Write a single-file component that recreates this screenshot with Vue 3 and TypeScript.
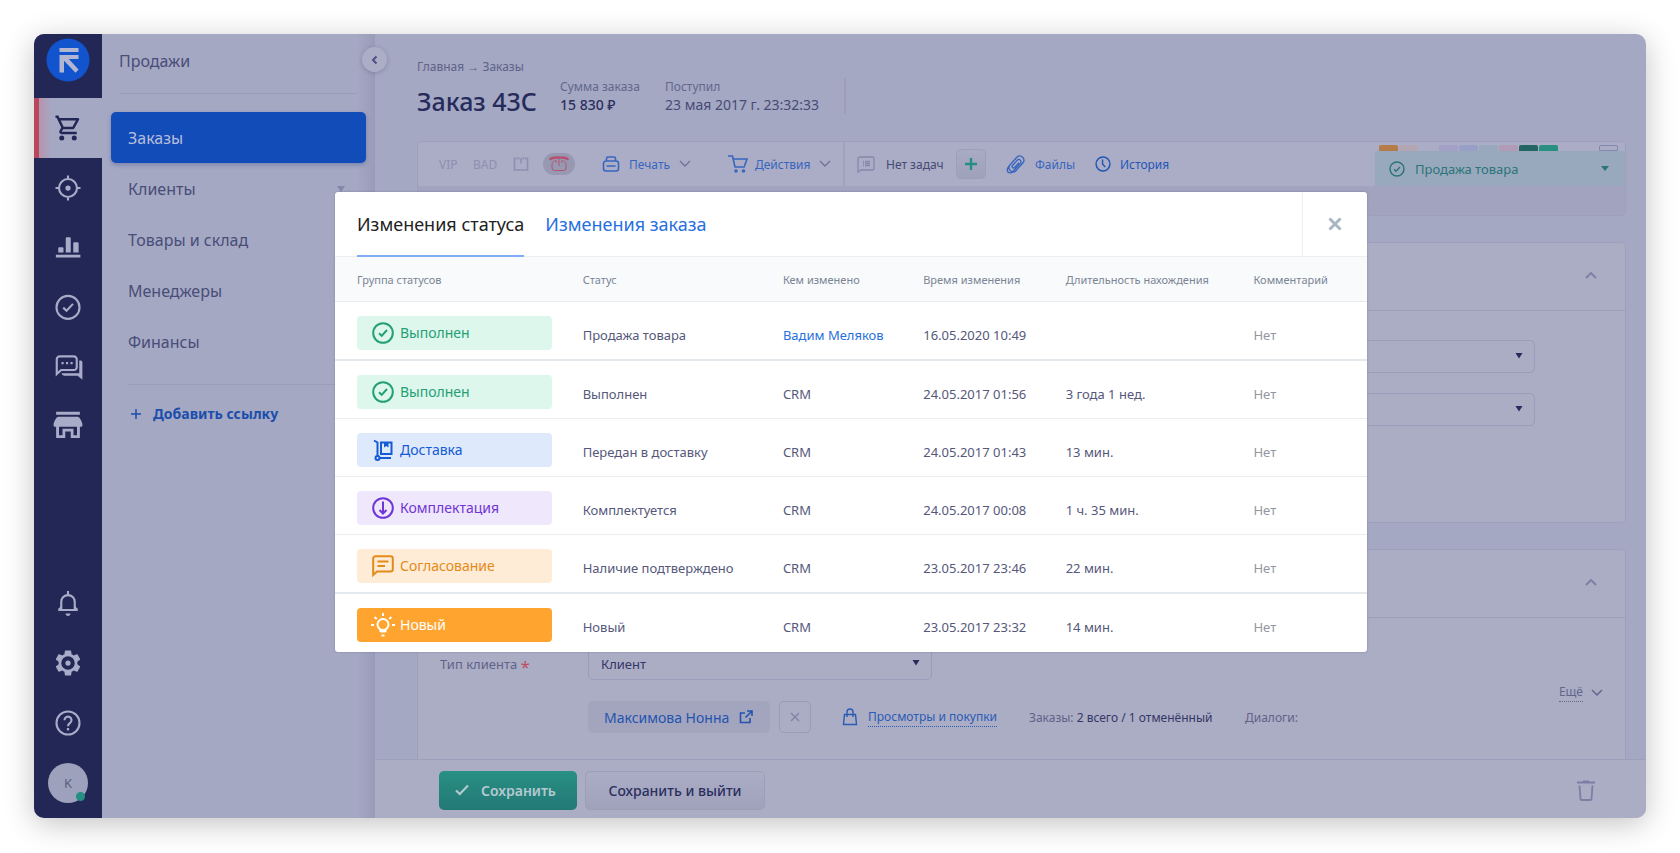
<script setup lang="ts">
import { ref } from 'vue'

interface Shape { d: string; fill?: boolean }
interface RailItem { id: string; label: string; shapes: Shape[] }
interface Change {
  kind: 'done' | 'delivery' | 'assembly' | 'approval' | 'fresh'
  group: string
  status: string
  author: string
  link?: boolean
  time: string
  duration: string
  strong?: boolean
}

const railTop: RailItem[] = [
  { id: 'sales', label: 'Продажи', shapes: [{ fill: true, d: 'M15.55 13c.75 0 1.41-.41 1.75-1.03l3.58-6.49c.37-.66-.11-1.48-.87-1.48H5.21l-.94-2H2v2h1l3.6 7.59-1.35 2.44C4.52 15.37 5.48 17 7 17h12v-2H7l1.1-2h7.45zM6.16 6h12.15l-2.76 5H8.53L6.16 6zM7 18a2 2 0 1 0 0 4 2 2 0 0 0 0-4zm10 0a2 2 0 1 0 0 4 2 2 0 0 0 0-4z' }] },
  { id: 'leads', label: 'Цели', shapes: [{ d: 'M12 4.8a7.2 7.2 0 1 0 0 14.4 7.2 7.2 0 0 0 0-14.4zM12 2v3M12 19v3M2 12h3M19 12h3' }, { fill: true, d: 'M12 9.9a2.1 2.1 0 1 0 0 4.2 2.1 2.1 0 0 0 0-4.2z' }] },
  { id: 'stats', label: 'Аналитика', shapes: [{ fill: true, d: 'M5 11.4h2.6a.8.8 0 0 1 .8.8v3.3H4.2v-3.3a.8.8 0 0 1 .8-.8zM11 3.4h2.4a.8.8 0 0 1 .8.8v11.3h-4V4.2a.8.8 0 0 1 .8-.8zM17 7.4h2.7a.8.8 0 0 1 .8.8v7.3h-4.3V8.2a.8.8 0 0 1 .8-.8zM2.3 17.4h19.6v2.2H2.3z' }] },
  { id: 'tasks', label: 'Задачи', shapes: [{ d: 'M12 2.3a9.2 9.2 0 1 0 0 18.4 9.2 9.2 0 0 0 0-18.4zM8.2 11.7l2.6 2.5 5.2-5.5' }] },
  { id: 'chats', label: 'Чаты', shapes: [{ d: 'M3 16.9V5a2.3 2.3 0 0 1 2.3-2.3h11.4A2.3 2.3 0 0 1 19 5v6.300a2.3 2.3 0 0 1-2.3 2.3H6.5z' }, { fill: true, d: 'M6.8 7.1h1.7v1.8H6.8zM10.4 7.1h1.7v1.8h-1.7zM14 7.1h1.7v1.8H14zM21 6h1.2a1.3 1.3 0 0 1 1.3 1.3v14l-3.800-3.2H9a2.5 2.500 0 0 1-2.200-1.900H21z' }] },
  { id: 'shop', label: 'Магазин', shapes: [{ fill: true, d: 'M2.5-1h19v2.400h-19zM4.300 3h15.400c1.600 0 3.800 4.200 3.800 6v1c0 .6-.4 1-1 1h-1v9h-7.300v-5.200h-4.400V20H2.500v-9h-1c-.6 0-1-.4-1-1V9c0-1.800 2.200-6 3.800-6zM4.800 11v6.700h2.800v-5.200h8.800v5.200h2.800V11z' }] },
]

const railBottom: RailItem[] = [
  { id: 'alerts', label: 'Уведомления', shapes: [{ d: 'M4.2 17.600h15.600M6.600 17.300v-6.200a5.400 5.400 0 0 1 10.800 0v6.200M12 2.300v3' }, { fill: true, d: 'M10 20.300h4c0 1.300-.9 2-2 2s-2-.7-2-2zM4 16.800l2.500-2.500v3zM20 16.800l-2.500-2.500v3z' }] },
  { id: 'settings', label: 'Настройки', shapes: [{ fill: true, d: 'M19.43 12.98c.04-.32.07-.64.07-.98 0-.34-.03-.66-.07-.98l2.11-1.65c.19-.15.24-.42.12-.64l-2-3.46c-.09-.16-.26-.25-.44-.25-.06 0-.12.01-.17.03l-2.49 1c-.52-.4-1.08-.73-1.69-.98l-.38-2.65C14.46 2.18 14.25 2 14 2h-4c-.25 0-.46.18-.49.42l-.38 2.65c-.61.25-1.17.59-1.69.98l-2.49-1c-.06-.02-.12-.03-.18-.03-.17 0-.34.09-.43.25l-2 3.46c-.13.22-.07.49.12.64l2.11 1.65c-.04.32-.07.65-.07.98 0 .33.03.66.07.98l-2.11 1.65c-.19.15-.24.42-.12.64l2 3.46c.09.16.26.25.44.25.06 0 .12-.01.17-.03l2.49-1c.52.4 1.08.73 1.69.98l.38 2.65c.03.24.24.42.49.42h4c.25 0 .46-.18.49-.42l.38-2.65c.61-.25 1.17-.59 1.69-.98l2.49 1c.06.02.12.03.18.03.17 0 .34-.09.43-.25l2-3.46c.12-.22.07-.49-.12-.64zM12 6.600a5.400 5.400 0 1 1 0 10.800 5.400 5.400 0 0 1 0-10.800zM12 9.900a2.100 2.100 0 1 0 0 4.200 2.100 2.100 0 0 0 0-4.200z' }] },
  { id: 'help', label: 'Помощь', shapes: [{ d: 'M12 2.8a9.2 9.2 0 1 0 0 18.4 9.2 9.2 0 0 0 0-18.4zM9.2 9.8a2.8 2.8 0 1 1 4.4 2.2c-1 .8-1.600 1.200-1.600 2.600' }, { fill: true, d: 'M11.1 16h1.800v1.900h-1.800z' }] },
]

const sections = ['Заказы', 'Клиенты', 'Товары и склад', 'Менеджеры', 'Финансы']
const strips = ['orange', 'beige', 'none', 'lilac', 'blue', 'current', 'pink', 'teal', 'green', 'none', 'none', 'empty']
const columns = ['Группа статусов', 'Статус', 'Кем изменено', 'Время изменения', 'Длительность нахождения', 'Комментарий']

const changes: Change[] = [
  { kind: 'done', group: 'Выполнен', status: 'Продажа товара', author: 'Вадим Меляков', link: true, time: '16.05.2020 10:49', duration: '', strong: true },
  { kind: 'done', group: 'Выполнен', status: 'Выполнен', author: 'CRM', time: '24.05.2017 01:56', duration: '3 года 1 нед.' },
  { kind: 'delivery', group: 'Доставка', status: 'Передан в доставку', author: 'CRM', time: '24.05.2017 01:43', duration: '13 мин.' },
  { kind: 'assembly', group: 'Комплектация', status: 'Комплектуется', author: 'CRM', time: '24.05.2017 00:08', duration: '1 ч. 35 мин.' },
  { kind: 'approval', group: 'Согласование', status: 'Наличие подтверждено', author: 'CRM', time: '23.05.2017 23:46', duration: '22 мин.', strong: true },
  { kind: 'fresh', group: 'Новый', status: 'Новый', author: 'CRM', time: '23.05.2017 23:32', duration: '14 мин.' },
]

const clientType = ref('Клиент')
</script>

<template>
  <div class="stage">
    <div class="app">
      <nav class="rail" aria-label="Модули">
        <a class="logo" href="#" aria-label="Главная">
          <svg viewBox="0 0 44 44" width="44" height="44">
            <circle cx="22" cy="22" r="21.5" fill="#1254cd" />
            <path fill="#b3b6d0" d="M13.5 10h19v4h-19zM13.5 17h19v4H22.8l9.7 10.5-3 3.200L18 22.800V34.500h-4.500z" />
          </svg>
        </a>
        <a v-for="(item, i) in railTop" :key="item.id" href="#" class="rail-item" :class="{ active: i === 0 }" :aria-label="item.label">
          <svg viewBox="0 0 24 24" width="30" height="30">
            <path v-for="(s, k) in item.shapes" :key="k" :d="s.d" :class="s.fill ? 'solid' : 'line'" />
          </svg>
        </a>
        <div class="spring"></div>
        <a v-for="item in railBottom" :key="item.id" href="#" class="rail-item" :aria-label="item.label">
          <svg viewBox="0 0 24 24" width="30" height="30">
            <path v-for="(s, k) in item.shapes" :key="k" :d="s.d" :class="s.fill ? 'solid' : 'line'" />
          </svg>
        </a>
        <div class="rail-item"><span class="avatar">K<i></i></span></div>
      </nav>

      <aside class="menu">
        <div class="menu-title">Продажи</div>
        <button class="collapse" aria-label="Свернуть">
          <svg viewBox="0 0 10 10" width="10" height="10"><path d="M6.5 1.5 3 5l3.5 3.5" /></svg>
        </button>
        <a v-for="(name, i) in sections" :key="name" href="#" class="section" :class="{ current: i === 0 }">
          <span>{{ name }}</span>
          <svg v-if="i === 1" viewBox="0 0 8 6" width="8" height="6"><path d="M0 0h8L4 6z" /></svg>
        </a>
        <a href="#" class="add-link">
          <svg viewBox="0 0 10 10" width="10" height="10"><path d="M5 0v10M0 5h10" /></svg>
          <span>Добавить ссылку</span>
        </a>
      </aside>

      <main class="main">
        <div class="scroll">
          <div class="crumbs"><a href="#">Главная</a> → <a href="#">Заказы</a></div>
          <header class="head">
            <h1>Заказ 43С</h1>
            <div class="fact sum"><span>Сумма заказа</span><b>15 830 ₽</b></div>
            <div class="fact date"><span>Поступил</span><em>23 мая 2017 г. 23:32:33</em></div>
          </header>

          <section class="toolbar">
            <div class="tools">
              <div class="marks">
                <button class="flag vip">VIP</button>
                <button class="flag bad">BAD</button>
                <button class="flag box" aria-label="Метка">
                  <svg viewBox="0 0 16 16" width="16" height="16"><path d="M4 2.500H1.500v11.500h13V2.500H12M8 2v5.500M5.500 1v2.500M10.500 1v2.500" /></svg>
                </button>
                <button class="flag phone" aria-label="Не звонить">
                  <svg viewBox="0 0 20 16" width="20" height="16"><path d="M5.500 4.500C3.800 5.500 3 7 3 9v3a2.500 2.500 0 0 0 2.500 2.500h9A2.500 2.500 0 0 0 17 12V9c0-2-.8-3.500-2.500-4.500M10 3v7M7 4v3M13 4v3" /><path class="handset" d="M1 4c.5-1.500 1.500-2 4-2.200 3-.3 7-.3 10 0 2.500.2 3.500.7 4 2.200" /></svg>
                </button>
                <button class="tool print">
                  <svg viewBox="0 0 18 16" width="18" height="16"><path d="M4.500 5V2.500A1.500 1.500 0 0 1 6 1h6a1.500 1.500 0 0 1 1.500 1.500V5M4 5h10a2.500 2.500 0 0 1 2.500 2.500v5A2.500 2.500 0 0 1 14 15H4a2.500 2.500 0 0 1-2.500-2.500v-5A2.500 2.500 0 0 1 4 5zM4.500 10h9" /></svg>
                  <span>Печать</span>
                  <svg class="chev" viewBox="0 0 12 8" width="12" height="8"><path d="M1 1l5 5 5-5" /></svg>
                </button>
                <button class="tool actions">
                  <svg viewBox="0 0 20 18" width="20" height="18"><path d="M0 1h4.500l2.500 11h10M5 4h14l-2.500 7" /><circle cx="8" cy="16" r="1" /><circle cx="15.5" cy="16" r="1" /></svg>
                  <span>Действия</span>
                  <svg class="chev" viewBox="0 0 12 8" width="12" height="8"><path d="M1 1l5 5 5-5" /></svg>
                </button>
              </div>
              <div class="work">
                <span class="tasks">
                  <svg viewBox="0 0 18 17" width="18" height="17"><path d="M1 16V2.500A1.500 1.500 0 0 1 2.500 1h13A1.500 1.500 0 0 1 17 2.500v10a1.500 1.500 0 0 1-1.500 1.500H4zM6 5.500h1M8 5.500h5M6 7.500h1M8 7.500h5M6 9.500h1M8 9.500h5" /></svg>
                  Нет задач
                </span>
                <button class="plus" aria-label="Добавить задачу">
                  <svg viewBox="0 0 12 12" width="12" height="12"><path d="M6 0v12M0 6h12" /></svg>
                </button>
                <button class="tool files">
                  <svg viewBox="0 0 20 20" width="20" height="20"><path d="M3.500 11.500l7.500-8.500a4.200 4.200 0 0 1 6 5.800l-7.500 8.400a4.200 4.200 0 0 1-6-5.500M3.500 11.500c-2.500 2.800-2.600 5-1.500 6.500 1.500 1.600 3.700 1 5.200-.7l7.300-8.200a2.200 2.200 0 0 0-3.200-3L6.500 11.500a1.500 1.500 0 0 0 2 2.200l4.500-5" /></svg>
                  <span>Файлы</span>
                </button>
                <button class="tool history">
                  <svg viewBox="0 0 18 18" width="16" height="16"><circle cx="9" cy="9" r="7.8" /><path d="M8.500 4v5l3 3.500" /></svg>
                  <span>История</span>
                </button>
              </div>
              <div class="state">
                <div class="strips"><i v-for="(s, i) in strips" :key="i" :class="s"></i></div>
                <button class="state-btn">
                  <svg viewBox="0 0 16 16" width="16" height="16"><circle cx="8" cy="8" r="7" /><path d="M5 8.200l2 2 4-4.200" /></svg>
                  <span>Продажа товара</span>
                  <svg class="caret" viewBox="0 0 8 5" width="8" height="5"><path d="M0 0h8L4 5z" /></svg>
                </button>
              </div>
            </div>
            <div class="under"></div>
          </section>

          <section class="card details">
            <div class="card-head">
              <button aria-label="Свернуть блок"><svg viewBox="0 0 12 8" width="12" height="8"><path d="M1 7l5-5 5 5" /></svg></button>
            </div>
            <div v-for="n in 2" :key="n" class="picker wide">
              <select :aria-label="'Поле ' + n"></select>
              <svg viewBox="0 0 8 6" width="8" height="6"><path d="M.5 0h7L4 5.500z" /></svg>
            </div>
          </section>

          <section class="card client">
            <div class="card-head">
              <button aria-label="Свернуть клиента"><svg viewBox="0 0 12 8" width="12" height="8"><path d="M1 7l5-5 5 5" /></svg></button>
            </div>
            <div class="field">
              <label for="client-type">Тип клиента <sup>*</sup></label>
              <div class="picker">
                <select id="client-type" v-model="clientType"><option>Клиент</option></select>
                <svg viewBox="0 0 8 6" width="8" height="6"><path d="M.5 0h7L4 5.500z" /></svg>
              </div>
            </div>
            <div class="more">
              <button><span>Ещё</span><svg viewBox="0 0 12 8" width="12" height="8"><path d="M1 1l5 5 5-5" /></svg></button>
            </div>
            <div class="person">
              <a class="chip" href="#">
                <span>Максимова Нонна</span>
                <svg viewBox="0 0 14 14" width="14" height="14"><path d="M6 3H1.500v9.500H11V8M8 1h5v5M13 1 6.500 7.500" /></svg>
              </a>
              <button class="remove" aria-label="Убрать клиента"><svg viewBox="0 0 10 10" width="10" height="10"><path d="M1 1l8 8M9 1 1 9" /></svg></button>
              <a class="views" href="#">
                <svg viewBox="0 0 16 18" width="16" height="18"><path d="M2.500 6.500h11l1 10h-13zM5 9V4a3 3 0 0 1 6 0v5" /></svg>
                <span>Просмотры и покупки</span>
              </a>
              <span class="orders">Заказы: <b>2 всего / 1 отменённый</b></span>
              <span class="dialogs">Диалоги:</span>
            </div>
          </section>
        </div>

        <footer class="foot">
          <button class="save">
            <svg viewBox="0 0 14 12" width="14" height="12"><path d="M1 6.500 4.800 10 13 1.500" /></svg>
            <span>Сохранить</span>
          </button>
          <button class="save-exit">Сохранить и выйти</button>
          <button class="trash" aria-label="Удалить">
            <svg viewBox="0 0 18 22" width="18" height="22"><path d="M0 3.500h18M2.500 6.500l1 13.500a1 1 0 0 0 1 1h9a1 1 0 0 0 1-1l1-13.500" /><path d="M6 2.500h6" /></svg>
          </button>
        </footer>
      </main>

      <div class="overlay">
        <div class="dialog" role="dialog" aria-label="История изменений">
          <div class="dialog-head">
            <button class="tab on">Изменения статуса</button>
            <button class="tab">Изменения заказа</button>
            <button class="close" aria-label="Закрыть"><svg viewBox="0 0 14 14" width="14" height="14"><path d="M1.500 1.500l11 11M12.500 1.500l-11 11" /></svg></button>
          </div>
          <table>
            <colgroup><col class="c1" /><col class="c2" /><col class="c3" /><col class="c4" /><col class="c5" /><col class="c6" /></colgroup>
            <thead>
              <tr><th v-for="c in columns" :key="c" scope="col">{{ c }}</th></tr>
            </thead>
            <tbody>
              <tr v-for="row in changes" :key="row.time" :class="{ strong: row.strong }">
                <td>
                  <div class="badge" :class="row.kind">
                    <svg viewBox="0 0 24 24" width="24" height="24">
                      <template v-if="row.kind === 'done'"><circle cx="12" cy="12" r="9.8" /><path d="M8 12.300l2.700 2.500L16 9" /></template>
                      <template v-else-if="row.kind === 'delivery'"><path d="M3 2.500 6.500 4.500V18M10 4.500h10.500v11.500H10zM9 20h11" /><path class="flap" d="M13 5v4.500l2.250-1.500 2.250 1.500V5z" /><circle cx="6.500" cy="20" r="2" /></template>
                      <template v-else-if="row.kind === 'assembly'"><circle cx="12" cy="12" r="9.8" /><path d="M12 5.500v12M8.500 14 12 17.500l3.500-3.500" /></template>
                      <template v-else-if="row.kind === 'approval'"><path d="M2.200 21V4.500A2.300 2.300 0 0 1 4.500 2.200h15a2.300 2.300 0 0 1 2.300 2.300v10.800a2.300 2.300 0 0 1-2.300 2.300H6zM6.500 7.500h11M6.500 12h7.500" /></template>
                      <template v-else><circle cx="12" cy="11.5" r="5.5" /><path d="M9.500 16v3M14.500 16v3M9.500 18.500h5M10.500 22.500h3M12 0v3M0 12h3M21 12h3M3.700 4l2 2M20.300 4l-2 2" /></template>
                    </svg>
                    <span>{{ row.group }}</span>
                  </div>
                </td>
                <td>{{ row.status }}</td>
                <td><a v-if="row.link" href="#">{{ row.author }}</a><template v-else>{{ row.author }}</template></td>
                <td>{{ row.time }}</td>
                <td>{{ row.duration }}</td>
                <td class="none">Нет</td>
              </tr>
            </tbody>
          </table>
        </div>
      </div>
    </div>
  </div>
</template>

<style>
body { background: #fff; }
</style>

<style scoped>
* { box-sizing: border-box; }
.stage { min-height: 100vh; padding: 34px 34px 35px; display: flex; overflow: hidden; font-family: "Noto Sans", "Open Sans", sans-serif; font-size: 13px; color: #2b2f5f; }
button, select { font: inherit; color: inherit; border: 0; background: none; padding: 0; margin: 0; }
a { text-decoration: none; color: inherit; }
svg { flex: none; fill: none; stroke: currentColor; display: block; overflow: visible; }
.app { position: relative; flex: 1; min-width: 0; display: flex; border-radius: 10px; overflow: hidden; background: #a4a8c3; box-shadow: 0 6px 30px rgba(0, 0, 0, 0.24); }

.rail { width: 68px; flex: none; background: #232755; display: flex; flex-direction: column; color: #a9acc8; padding-bottom: 5px; }
.logo { height: 64px; padding: 4px 12px; }
.logo path, .logo circle { stroke: none; }
.rail-item { height: 60px; display: flex; align-items: center; justify-content: center; }
.rail-item.active { background: linear-gradient(90deg, #b8475d 5px, #b794ae 5px, #a4a8c3 18px); color: #232755; }
.solid { fill: currentColor; stroke: none; fill-rule: evenodd; }
.line { stroke-width: 1.7; }
.spring { flex: 1; }
.avatar { position: relative; width: 40px; height: 40px; border-radius: 50%; background: #9ea1bb; color: #5a5e84; display: flex; align-items: center; justify-content: center; font-size: 13px; }
.avatar i { position: absolute; right: 3px; bottom: 2px; width: 9px; height: 9px; border-radius: 50%; background: #268f84; }

.menu { position: relative; width: 273px; flex: none; padding: 0 9px; background: linear-gradient(90deg, rgba(150, 151, 182, 0) 255px, #9a9bb9 273px); color: #494d78; font-size: 16px; }
.menu-title { height: 60px; padding: 15px 0 0 8px; margin: 0 9px 18px 0; line-height: 24px; }
.menu-title::after { content: ""; display: block; height: 1px; margin: 20px 0 0 0; background: #999cba; }
.collapse { position: absolute; right: -12px; top: 13px; width: 25px; height: 25px; border-radius: 50%; background: #acaec8; box-shadow: 0 1px 4px rgba(60, 60, 110, 0.3); display: flex; align-items: center; justify-content: center; color: #4b5080; }
.collapse svg { stroke-width: 2; }
.section { height: 51px; padding: 0 21px 0 17px; display: flex; align-items: center; justify-content: space-between; }
.section svg { fill: #8486aa; stroke: none; }
.section.current { background: #124cb9; color: #b9bedb; border-radius: 5px; box-shadow: 0 2px 4px rgba(30, 50, 130, 0.3); }
.add-link { display: flex; align-items: center; gap: 12px; margin: 17px 9px 0 17px; padding: 17px 0 0 3px; border-top: 1px solid #999cba; color: #1b4eab; font-weight: 700; font-size: 14px; line-height: 24px; }
.add-link svg { stroke-width: 1.5; }

.main { flex: 1; min-width: 0; display: flex; flex-direction: column; }
.scroll { flex: 1; padding: 24px 20px 0 42px; display: flex; flex-direction: column; }
.crumbs { font-size: 12px; line-height: 18px; color: #5f6388; }
.head { display: flex; align-items: flex-start; height: 40px; margin-top: 2px; }
h1 { margin: 7px 0 0; width: 143px; font-size: 25px; line-height: 32px; font-weight: 500; color: #262b5b; white-space: nowrap; }
.fact { display: flex; flex-direction: column; line-height: 18px; white-space: nowrap; }
.fact span { color: #63678c; font-size: 12px; }
.fact.sum { width: 105px; }
.fact b { font-weight: 500; font-size: 14px; }
.fact em { font-style: normal; font-size: 14px; color: #474b76; }
.fact.date { width: 181px; border-right: 2px solid #9c9ebc; height: 36px; }

.toolbar { margin-top: 23px; border: 1px solid #9da0bd; border-radius: 5px; background: #a1a3bf; }
.tools { display: flex; height: 44px; background: #abadc6; border-radius: 4px 4px 0 0; }
.under { height: 29px; }
.marks { display: flex; align-items: center; width: 427px; border-right: 2px solid #a0a2bf; padding-left: 21px; color: #8d90ae; font-size: 12px; }
.flag { display: flex; align-items: center; }
.vip { width: 34px; }
.bad { width: 40px; }
.box { width: 30px; }
.box svg { stroke-width: 1.6; }
.phone { width: 32px; height: 22px; border-radius: 11px; background: #9799b2; color: #b6516f; justify-content: center; }
.handset { stroke-width: 2.4; }
.tool { display: flex; align-items: center; color: #3765be; font-size: 12px; }
.tool span { margin-left: 9px; }
.tool svg { stroke-width: 1.6; }
.tool .chev { margin-left: 9px; color: #6f7499; stroke-width: 1.4; }
.print { margin-left: 27px; width: 126px; }
.actions span { margin-left: 7px; }
.work { display: flex; align-items: center; flex: 1; padding-left: 12px; font-size: 12px; color: #454974; }
.tasks { display: flex; align-items: center; gap: 11px; width: 99px; white-space: nowrap; }
.tasks svg { color: #8487aa; stroke-width: 1.3; }
.plus { width: 30px; height: 30px; border: 1px solid #9c9fba; border-radius: 5px; background: linear-gradient(#a9abc4, #9fa1bb); color: #258f83; display: flex; align-items: center; justify-content: center; }
.plus svg { stroke-width: 2.4; }
.files { margin-left: 20px; width: 89px; }
.files svg { stroke-width: 1.3; }
.history { color: #1f55b7; }
.state { width: 250px; flex: none; color: #2c7477; display: flex; flex-direction: column; }
.strips { height: 9px; display: flex; padding: 3px 4px 0; gap: 1px; }
.strips i { width: 19px; height: 6px; border-radius: 2px 2px 0 0; }
.orange { background: #b47c49; }
.beige { background: #b3a5b2; }
.lilac { background: #a49fc6; }
.blue { background: #98a0c8; }
.strips .current { background: #98a9bd; }
.pink { background: #b29bb8; }
.teal { background: #236464; }
.green { background: #289082; }
.empty { border: 1px solid #8588ac; }
.state-btn { flex: 1; background: #98a9bd; display: flex; align-items: center; padding: 0 16px 0 14px; font-size: 13px; }
.state-btn span { flex: 1; text-align: left; margin-left: 10px; }
.state-btn svg { stroke-width: 1.4; }
.state-btn .caret { fill: #2c7477; stroke: none; }

.card { background: #abadc5; border: 1px solid #9da0bd; border-radius: 5px; }
.card-head { height: 68px; border-bottom: 1px solid #9da0bd; display: flex; align-items: center; justify-content: flex-end; padding: 0 28px 4px 0; color: #7b7fa3; }
.card-head svg { stroke-width: 1.8; }
.details { margin-top: 26px; height: 281px; }
.client { margin-top: 26px; flex: 1; border-bottom: 0; border-radius: 5px 5px 0 0; }
.picker { position: relative; width: 344px; }
.picker select { appearance: none; display: block; width: 100%; height: 33px; border: 1px solid #999cba; border-radius: 5px; padding: 0 12px; font-size: 13px; color: #333765; }
.picker svg { position: absolute; right: 12px; top: 13px; fill: #262b5b; stroke: none; }
.picker.wide { width: auto; margin: 0 90px 20px 170px; }
.picker.wide:nth-of-type(2) { margin-top: 29px; }
.field { display: flex; align-items: center; margin: 29px 0 0 22px; }
.field label { width: 148px; color: #5f6388; font-size: 13px; }
.field sup { color: #bf4d62; font-size: 17px; line-height: 10px; vertical-align: -4px; }
.more { display: flex; justify-content: flex-end; height: 22px; padding-right: 22px; align-items: flex-end; color: #62668d; font-size: 12px; }
.more button { display: flex; align-items: center; gap: 8px; line-height: 18px; }
.more span { border-bottom: 1px dotted #62668d; }
.more svg { stroke-width: 1.5; }
.person { display: flex; align-items: center; margin: -1px 0 0 170px; font-size: 12px; color: #5f6388; white-space: nowrap; }
.chip { width: 182px; height: 32px; border-radius: 5px; background: #a3a5bf; color: #2354ae; font-size: 14px; display: flex; align-items: center; justify-content: space-between; padding: 0 17px 0 16px; }
.chip svg { stroke-width: 1.6; }
.remove { width: 32px; height: 32px; margin-left: 9px; border: 1px solid #999cba; border-radius: 5px; display: flex; align-items: center; justify-content: center; color: #8386a8; }
.remove svg { stroke-width: 1.6; }
.views { display: flex; align-items: center; gap: 10px; margin-left: 31px; width: 187px; color: #2a5bb5; }
.views svg { stroke-width: 1.4; }
.views span { border-bottom: 1px dotted #2a5bb5; line-height: 18px; }
.orders { width: 216px; }
.orders b { font-weight: 400; color: #333765; }

.foot { height: 59px; border-top: 1px solid #9da0bd; background: #abadc5; display: flex; align-items: center; padding: 2px 51px 0 64px; gap: 8px; font-size: 14px; }
.save { width: 138px; height: 39px; border-radius: 5px; background: linear-gradient(#289084, #237876); color: #b4c9cf; font-weight: 600; display: flex; align-items: center; gap: 12px; padding-left: 16px; }
.save svg { stroke-width: 2.2; }
.save-exit { width: 180px; height: 39px; border: 1px solid #9c9fba; border-radius: 5px; background: linear-gradient(#abadc6, #a0a2bc); font-weight: 500; }
.trash { margin-left: auto; color: #7b7fa3; }
.trash svg { stroke-width: 1.8; }

.overlay { position: absolute; inset: 0; padding: 158px 279px 0 301px; }
.dialog { background: #fff; border-radius: 3px; overflow: hidden; box-shadow: 0 0 2px rgba(60, 60, 110, 0.4); }
.dialog-head { height: 65px; display: flex; gap: 21px; padding-left: 22px; border-bottom: 1px solid #eceef2; }
.tab { height: 65px; font-size: 18px; color: #2770e0; border-bottom: 2px solid transparent; white-space: nowrap; }
.tab.on { color: #222; border-bottom-color: #7fadf3; }
.close { margin-left: auto; width: 65px; border-left: 1px solid #eceef2; color: #a9b5c1; display: flex; align-items: center; justify-content: center; }
.close svg { stroke-width: 3; }
table { width: 100%; table-layout: fixed; border-collapse: separate; border-spacing: 0; }
.c1 { width: 24%; }
.c2 { width: 19.4%; }
.c3 { width: 13.6%; }
.c4 { width: 13.8%; }
.c5 { width: 18.2%; }
.c6 { width: 11%; }
th { height: 45px; padding: 0; background: #f8fafc; border-bottom: 1px solid #e9ecef; text-align: left; font-weight: 400; font-size: 11px; color: #7b8595; white-space: nowrap; }
td { height: 58px; padding: 8px 0 0; border-bottom: 1px solid #ececef; color: #55587a; font-size: 13px; white-space: nowrap; vertical-align: middle; }
.strong td { height: 59px; border-bottom: 2px solid #e4e9ee; }
tr:last-child td { border-bottom-color: transparent; }
th:first-child, td:first-child { padding-left: 22px; }
td a { color: #2770e0; }
td.none { color: #9496a0; }
.badge { width: 195px; height: 34px; margin-bottom: 4px; border-radius: 4px; display: flex; align-items: center; gap: 5px; padding-left: 14px; font-size: 14px; }
.badge svg { stroke-width: 2; }
.badge .flap { fill: currentColor; stroke: none; }
.done { background: #def7ed; color: #24a074; }
.delivery { background: #dee9fc; color: #145bd4; }
.assembly { background: #efe7fb; color: #6f35d6; }
.approval { background: #ffecd6; color: #e48a18; }
.fresh { background: #ffa52f; color: #fff; }
</style>
